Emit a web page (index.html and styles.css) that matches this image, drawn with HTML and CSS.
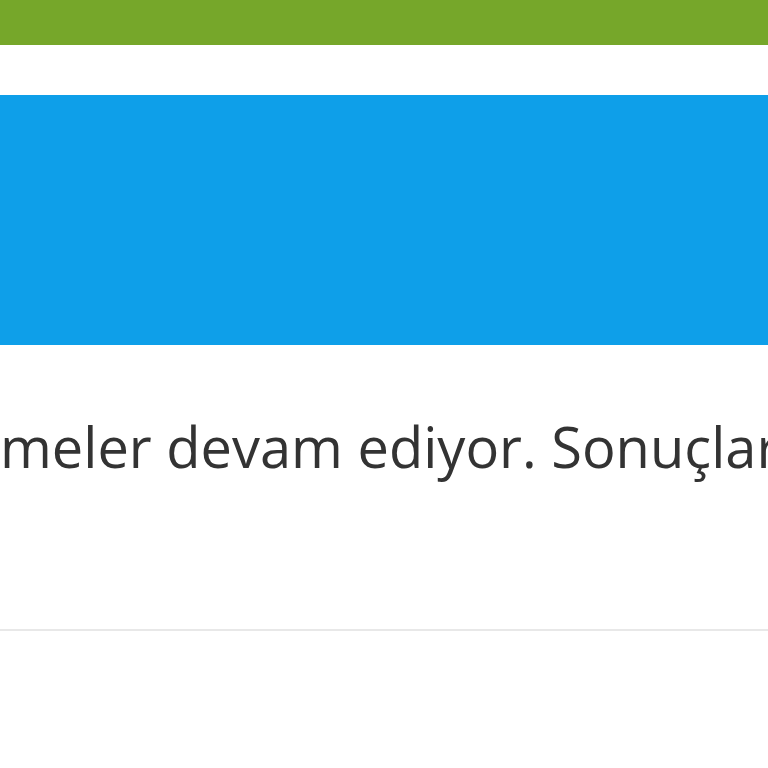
FILE: index.html
```html
<!DOCTYPE html>
<html lang="tr">
<head>
<meta charset="utf-8">
<link rel="stylesheet" href="styles.css">
</head>
<body>
<div class="page">
  <header class="topbar"></header>
  <div class="spacer"></div>
  <section class="banner"></section>
  <div class="notice">
    <p class="notice-text">meler devam ediyor. Sonuçlar</p>
  </div>
  <hr class="divider">
</div>
</body>
</html>
```
FILE: styles.css
```css
html, body {
  margin: 0;
  padding: 0;
  background: #ffffff;
}
.page {
  width: 768px;
  height: 768px;
  overflow: hidden;
  display: flex;
  flex-direction: column;
}
.topbar {
  height: 45px;
  background: #76a72a;
  flex: none;
}
.spacer {
  height: 50px;
  flex: none;
}
.banner {
  height: 250px;
  background: #0e9fe9;
  flex: none;
}
.notice {
  height: 284px;
  flex: none;
  overflow: hidden;
  box-sizing: border-box;
  padding-top: 61px;
}
.notice-text {
  margin: 0;
  white-space: nowrap;
  font-family: "Open Sans", "DejaVu Sans", sans-serif;
  font-size: 56px;
  line-height: 80px;
  color: #333333;
}
.divider {
  margin: 0;
  border: 0;
  height: 2px;
  background: #e8e8e8;
  flex: none;
}
```
